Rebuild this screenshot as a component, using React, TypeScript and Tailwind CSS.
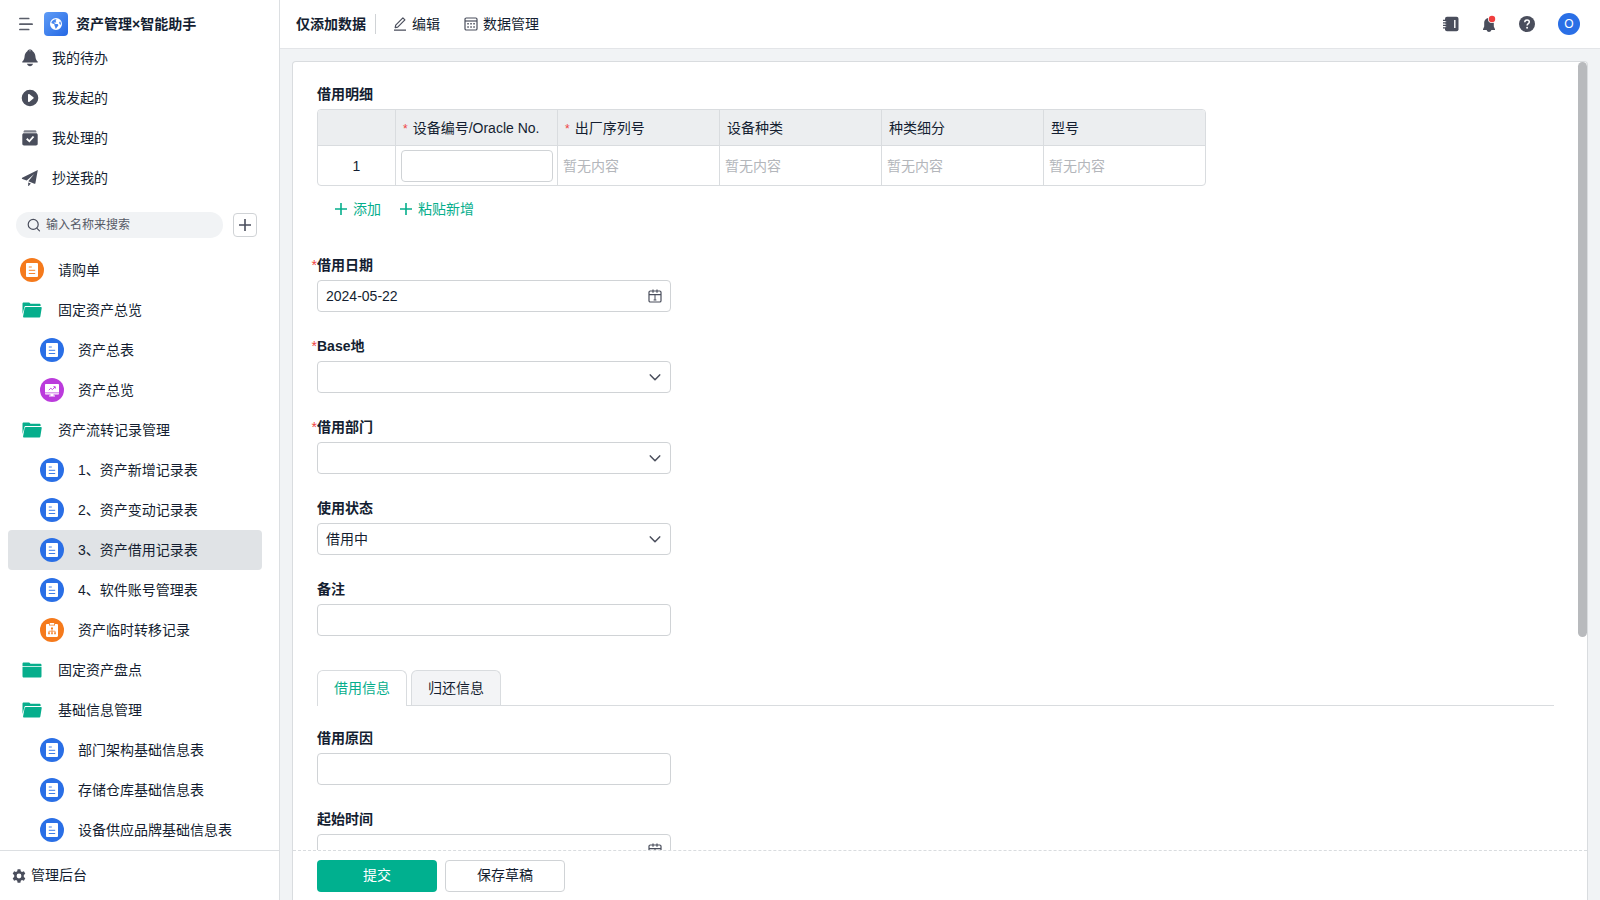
import type { ReactNode } from 'react';
import { FaEarthAmericas } from 'react-icons/fa6';

type IconProps = { className?: string };

const INK = 'text-[#4a4e5c]';

function MenuIcon() {
  return (
    <svg viewBox="0 0 14 14" className="size-3.5 text-[#5a5e6a]" fill="none" stroke="currentColor" strokeWidth="1.7" strokeLinecap="round">
      <path d="M0.900 1.500h8.800M0.900 7.200h12.200M0.900 12.500h8.800" />
    </svg>
  );
}

function GlobeLogo() {
  return (
    <span className="flex size-6 items-center justify-center rounded bg-linear-to-br from-[#5f9cf6] to-[#2467e4] text-white">
      <FaEarthAmericas className="size-3" />
    </span>
  );
}

function BellSolid() {
  return (
    <svg viewBox="0 0 18 18" className="size-[18px]" fill="currentColor">
      <path
        fillRule="evenodd"
        d="M9 .5c1.300 0 2.300.7 2.700 1.700 1.700 1.100 2.500 2.900 2.700 5.100.2 2.400.8 4 2.200 5.200.4.400.2 1.100-.4 1.100H1.800c-.6 0-.8-.7-.4-1.100 1.400-1.200 2-2.800 2.200-5.200.2-2.200 1-4 2.700-5.100C6.700 1.200 7.700.5 9 .5zm0 1c-.5 0-.9.300-1.100.7a6 6 0 0 1 2.200 0C9.900 1.800 9.500 1.500 9 1.500z"
      />
      <path d="M6 14.800h6c-.3 1.500-1.500 2.400-3 2.400s-2.700-.9-3-2.400z" />
    </svg>
  );
}

function PlaySolid() {
  return (
    <svg viewBox="0 0 18 18" className="size-[18px]" fill="currentColor">
      <path fillRule="evenodd" d="M9 .7a8.300 8.300 0 1 0 0 16.600A8.300 8.300 0 0 0 9 .7zM7 5.700c0-.7.600-1 1.200-.7l4.200 3.300c.4.300.4 1 0 1.300L8.200 12.900c-.5.4-1.200.1-1.200-.6z" />
    </svg>
  );
}

function DoneSolid() {
  return (
    <svg viewBox="0 0 18 18" className="size-[18px]" fill="currentColor">
      <path d="M4 1.200h10c.8 0 1.400.6 1.400 1.300v.9H2.600v-.9c0-.7.600-1.300 1.400-1.300z" opacity=".7" />
      <path fillRule="evenodd" d="M3 4.200h12c1 0 1.700.7 1.700 1.700v8.800c0 1-.7 1.700-1.700 1.700H3c-1 0-1.700-.7-1.700-1.700V5.900c0-1 .7-1.700 1.700-1.700zm8.800 2.700l-3.500 4-1.900-1.800-1.300 1.300 3.300 3.100 4.900-5.400z" />
    </svg>
  );
}

function SendSolid() {
  return (
    <svg viewBox="0 0 18 18" className="size-[18px]" fill="currentColor">
      <path d="M16.800.9L1.200 8.800c-.5.300-.4.900.1 1.100l4.400 1.700L13.200 5 7.300 12.300l6.100 2.400c.5.200.9 0 1-.5z" />
      <path d="M7.200 13.500l2.700 1-2.200 2.400c-.2.200-.5.100-.5-.2z" />
    </svg>
  );
}

function SearchIcon() {
  return (
    <svg viewBox="0 0 14 14" className={`size-3.5 shrink-0 ${INK}`} fill="none" stroke="currentColor" strokeWidth="1.2" strokeLinecap="round">
      <circle cx="6.200" cy="6.400" r="5" />
      <path d="M10 10.400l2.500 2.500" />
    </svg>
  );
}

function PlusIcon({ className }: IconProps) {
  return (
    <svg viewBox="0 0 12 12" className={className} fill="none" stroke="currentColor" strokeWidth="1.600">
      <path d="M6 0v12M0 6h12" />
    </svg>
  );
}

function FolderIcon({ open }: { open: boolean }) {
  return (
    <svg viewBox="0 0 20 16" className="h-4 w-5 text-[#06ae8c]" fill="currentColor">
      {open ? (
        <>
          <path d="M.5 12V1.700C.5 1 1 .5 1.700.5h5.500l1.300 1.200h8.800c.8 0 1.300.5 1.300 1.300v1.100H4c-1 0-1.500.5-1.700 1.300z" />
          <path d="M4 4.900h14.900c.5 0 .9.500.8 1l-1.300 8.300c-.1.800-.6 1.300-1.400 1.300H2.200c-.8 0-1.300-.6-1.100-1.300l1.500-8.200c.2-.7.700-1.100 1.400-1.100z" />
        </>
      ) : (
        <>
          <path d="M.5 4.200V1.700C.5 1 1 .5 1.700.5h5.500l1.300 1.200h9.700c.7 0 1.300.5 1.300 1.200v1.300z" />
          <path d="M.5 5.100h19v9.100c0 .7-.6 1.300-1.300 1.300H1.800c-.7 0-1.300-.6-1.300-1.300z" />
        </>
      )}
    </svg>
  );
}

function FormGlyph() {
  return (
    <svg viewBox="0 0 24 24" className="size-6">
      <rect x="6" y="5" width="12" height="14" rx="1" fill="#fff" />
      <path d="M8.800 9h3M8.800 12.300h6.400M8.800 15.500h6.400" stroke="currentColor" strokeWidth="1" opacity=".9" />
    </svg>
  );
}

function BoardGlyph() {
  return (
    <svg viewBox="0 0 24 24" className="size-6">
      <path d="M6 6h12c.6 0 1 .4 1 1v7.500H5V7c0-.6.400-1 1-1zM5 15.200h14v.3c0 .6-.4 1-1 1h-4.500v1H15v1H9v-1h1.500v-1H6c-.6 0-1-.4-1-1z" fill="#fff" />
      <path d="M8.800 12.200l2-2 1.600 1.400 2.600-2.600M13.400 8.700h1.900v1.900" fill="none" stroke="currentColor" strokeWidth=".9" />
    </svg>
  );
}

function FlowGlyph() {
  return (
    <svg viewBox="0 0 24 24" className="size-6">
      <path d="M7.200 6H9v1.500h6V6h1.800c.7 0 1.200.5 1.200 1.200v10.600c0 .7-.5 1.200-1.200 1.200H7.200c-.7 0-1.200-.5-1.200-1.200V7.200C6 6.500 6.500 6 7.200 6z" fill="#fff" />
      <path d="M9.800 5h4.400v1.700H9.800z" fill="#fff" />
      <path d="M12 10.500v4.500M8.900 15v-1.800h6.200V15" fill="none" stroke="currentColor" strokeWidth=".7" />
      <path d="M11 9.500h2v1.800h-2zM8.200 14.600h1.600v1.700H8.200zM11.200 14.600h1.600v1.700h-1.600zM14.200 14.600h1.600v1.700h-1.600z" fill="currentColor" />
    </svg>
  );
}

function GearIcon() {
  return (
    <svg viewBox="0 0 14 14" className={`size-3.5 ${INK}`}>
      <path
        fill="currentColor"
        fillRule="evenodd"
        d="M5.600.300h2.800l.4 1.900 1.200.7 1.900-.6 1.400 2.400-1.500 1.300v2l1.500 1.300-1.400 2.400-1.900-.6-1.200.7-.4 1.900H5.600l-.4-1.900-1.200-.7-1.900.6L.700 9.300 2.200 8V6L.700 4.700l1.400-2.400 1.900.6 1.200-.7zM7 4.600a2.400 2.400 0 1 0 0 4.800 2.400 2.400 0 0 0 0-4.800z"
      />
    </svg>
  );
}

function PencilIcon() {
  return (
    <svg viewBox="0 0 14 14" className={`size-3.5 ${INK}`} fill="none" stroke="currentColor" strokeWidth="1.200" strokeLinejoin="round">
      <path d="M2.200 10.600l.5-2.500L9.900.9l2 2-7.200 7.200zM1 13.200h12" />
    </svg>
  );
}

function DataIcon() {
  return (
    <svg viewBox="0 0 14 14" className={`size-3.5 ${INK}`} fill="none" stroke="currentColor" strokeWidth="1.200">
      <rect x="1" y="1" width="12" height="12" rx="1.300" />
      <path d="M1 4h12" />
      <path d="M3.300 6.800h1.500M6.300 6.800h1.500M9.300 6.800h1.500M3.300 10h1.500M6.300 10h1.500M9.300 10h1.500" strokeWidth="1.500" />
    </svg>
  );
}

function ContactsIcon() {
  return (
    <svg viewBox="0 0 16 16" className="size-4">
      <rect x="2" y=".7" width="13.500" height="14.600" rx="2" fill="currentColor" />
      <path d="M0 4.400h2.600M0 6.900h2.600M0 9.400h2.600M0 11.900h2.600" stroke="currentColor" strokeWidth="1.200" />
      <path d="M1.800 5.700h1.400M1.800 8.200h1.400M1.800 10.700h1.400" stroke="#fff" strokeWidth=".8" />
      <path d="M11.800 4v8" stroke="#fff" strokeWidth="1.400" />
    </svg>
  );
}

function NoticeIcon() {
  return (
    <svg viewBox="0 0 16 18" className="h-[18px] w-4">
      <path d="M8 3c3 0 4.800 2.200 4.800 5v3.600l1.200 2.600v.8h-3.600C10 16.200 9.200 17 8 17s-2-.8-2.400-2H2v-.8l1.200-2.600V8c0-2.800 1.800-5 4.800-5z" fill="currentColor" />
      <circle cx="11" cy="4" r="4" fill="#fff" />
      <circle cx="11" cy="4" r="3.200" fill="#f03e3e" />
    </svg>
  );
}

function HelpIcon() {
  return (
    <svg viewBox="0 0 16 16" className="size-4">
      <circle cx="8" cy="8" r="8" fill="currentColor" />
      <path d="M5.700 6.200c.1-1.400 1-2.200 2.300-2.200s2.300.8 2.300 2c0 1.700-2.200 1.700-2.200 3.500" fill="none" stroke="#fff" strokeWidth="1.500" />
      <circle cx="8.100" cy="11.700" r=".95" fill="#fff" />
    </svg>
  );
}

function CalendarIcon() {
  return (
    <svg viewBox="0 0 14 14" className={`size-3.5 ${INK}`} fill="none" stroke="currentColor" strokeWidth="1.200">
      <rect x="1" y="2" width="12" height="11" rx="1.300" />
      <path d="M1 5.600h12M5 .600v3.200M9 .600v3.200" />
      <path d="M7 5.600v5.400M5.600 11h2.800" strokeWidth="1" />
    </svg>
  );
}

function ChevronIcon() {
  return (
    <svg viewBox="0 0 14 14" className={`size-3.5 ${INK}`} fill="none" stroke="currentColor" strokeWidth="1.500" strokeLinecap="round" strokeLinejoin="round">
      <path d="M2.300 4.900L7 9.700l4.700-4.800" />
    </svg>
  );
}

const shortcuts: { label: string; icon: ReactNode }[] = [
  { label: '我的待办', icon: <BellSolid /> },
  { label: '我发起的', icon: <PlaySolid /> },
  { label: '我处理的', icon: <DoneSolid /> },
  { label: '抄送我的', icon: <SendSolid /> },
];

type Kind = 'form' | 'flow' | 'purchase' | 'board' | 'open' | 'closed';

const entries: { label: string; kind: Kind; child?: boolean; active?: boolean }[] = [
  { label: '请购单', kind: 'purchase' },
  { label: '固定资产总览', kind: 'open' },
  { label: '资产总表', kind: 'form', child: true },
  { label: '资产总览', kind: 'board', child: true },
  { label: '资产流转记录管理', kind: 'open' },
  { label: '1、资产新增记录表', kind: 'form', child: true },
  { label: '2、资产变动记录表', kind: 'form', child: true },
  { label: '3、资产借用记录表', kind: 'form', child: true, active: true },
  { label: '4、软件账号管理表', kind: 'form', child: true },
  { label: '资产临时转移记录', kind: 'flow', child: true },
  { label: '固定资产盘点', kind: 'closed' },
  { label: '基础信息管理', kind: 'open' },
  { label: '部门架构基础信息表', kind: 'form', child: true },
  { label: '存储仓库基础信息表', kind: 'form', child: true },
  { label: '设备供应品牌基础信息表', kind: 'form', child: true },
];

const badgeTone: Record<'form' | 'flow' | 'purchase' | 'board', string> = {
  form: 'bg-[#2a6fe6] text-[#2a6fe6]',
  flow: 'bg-[#f57a1c] text-[#f57a1c]',
  purchase: 'bg-[#f57a1c] text-[#f57a1c]',
  board: 'bg-[#bb3bdc] text-[#bb3bdc]',
};

function EntryIcon({ kind }: { kind: Kind }) {
  if (kind === 'open' || kind === 'closed') {
    return (
      <span className="flex size-6 items-center justify-center">
        <FolderIcon open={kind === 'open'} />
      </span>
    );
  }
  return (
    <span className={`size-6 overflow-hidden rounded-full ${badgeTone[kind]}`}>
      {kind === 'board' ? <BoardGlyph /> : kind === 'flow' ? <FlowGlyph /> : <FormGlyph />}
    </span>
  );
}

function Sidebar() {
  return (
    <aside className="flex w-70 shrink-0 flex-col border-r border-[#dcdfe2] bg-white">
      <div className="flex items-center pt-3 pb-0.5 pl-[19px]">
        <button type="button" aria-label="菜单">
          <MenuIcon />
        </button>
        <span className="ml-[11px]">
          <GlobeLogo />
        </span>
        <h1 className="ml-2 font-semibold">资产管理×智能助手</h1>
      </div>

      <nav className="min-h-0 flex-1 overflow-y-auto [scrollbar-width:none]">
        <ul>
          {shortcuts.map((s) => (
            <li key={s.label}>
              <a href="#" className="flex h-10 items-center gap-[13px] pl-[21px]">
                <span className={INK}>{s.icon}</span>
                {s.label}
              </a>
            </li>
          ))}
        </ul>

        <div className="flex items-center gap-2.5 pt-3.5 pb-3 pl-4">
          <label className="flex h-[26px] w-[207px] items-center gap-[5px] rounded-full bg-[#f1f3f5] px-[11px]">
            <SearchIcon />
            <input
              aria-label="搜索"
              placeholder="输入名称来搜索"
              className="w-full bg-transparent text-xs outline-none placeholder:text-[#565a66]"
            />
          </label>
          <button type="button" aria-label="新建" className="flex size-6 items-center justify-center rounded border border-[#d0d3d6] text-[#4a4e5c]">
            <PlusIcon className="size-3" />
          </button>
        </div>

        <ul className="pr-[17px] pl-2">
          {entries.map((e) => (
            <li key={e.label}>
              <a
                href="#"
                className={`flex h-10 items-center gap-3.5 rounded ${e.child ? 'pl-8' : 'pl-3'} ${e.active ? 'bg-[#e0e3e6]' : ''}`}
              >
                <EntryIcon kind={e.kind} />
                {e.label}
              </a>
            </li>
          ))}
        </ul>
      </nav>

      <a href="#" className="flex h-[50px] items-center gap-[5px] border-t border-[#dcdfe2] pl-3">
        <GearIcon />
        管理后台
      </a>
    </aside>
  );
}

function TopBar() {
  return (
    <header className="flex h-[49px] shrink-0 items-center justify-between border-b border-[#e3e5e8] bg-white pr-5 pl-4">
      <div className="flex items-center">
        <h2 className="font-semibold">仅添加数据</h2>
        <span className="ml-[9px] h-5 w-px bg-[#d0d3d6]" />
        <button type="button" className="ml-[17px] flex items-center gap-[5px]">
          <PencilIcon />
          编辑
        </button>
        <button type="button" className="ml-6 flex items-center gap-[5px]">
          <DataIcon />
          数据管理
        </button>
      </div>
      <div className="flex items-center gap-[23px]">
        <div className={`flex items-center gap-[22px] ${INK}`}>
          <button type="button" aria-label="通讯录">
            <ContactsIcon />
          </button>
          <button type="button" aria-label="通知">
            <NoticeIcon />
          </button>
          <button type="button" aria-label="帮助">
            <HelpIcon />
          </button>
        </div>
        <button type="button" className="flex size-[22px] items-center justify-center rounded-full bg-[#2a6fe6] text-xs text-white">
          O
        </button>
      </div>
    </header>
  );
}

const control = 'block h-8 w-full rounded border border-[#d0d3d6] bg-white px-2 outline-none';

function Field({ id, label, required, children }: { id: string; label: string; required?: boolean; children: ReactNode }) {
  return (
    <div className="w-[354px]">
      <label htmlFor={id} className="relative mb-1 block font-semibold">
        {required && <span className="absolute right-full font-normal text-[#ef4444]">*</span>}
        {label}
      </label>
      <div className="relative">{children}</div>
    </div>
  );
}

function TextField({ id, label }: { id: string; label: string }) {
  return (
    <Field id={id} label={label}>
      <input id={id} className={control} />
    </Field>
  );
}

function DateField({ id, label, required, value }: { id: string; label: string; required?: boolean; value?: string }) {
  return (
    <Field id={id} label={label} required={required}>
      <input id={id} defaultValue={value} className={control} />
      <span className="pointer-events-none absolute inset-y-0 right-[9px] flex items-center">
        <CalendarIcon />
      </span>
    </Field>
  );
}

function SelectField({ id, label, required, options }: { id: string; label: string; required?: boolean; options: string[] }) {
  return (
    <Field id={id} label={label} required={required}>
      <select id={id} className={`${control} appearance-none`}>
        {options.map((o) => (
          <option key={o}>{o}</option>
        ))}
      </select>
      <span className="pointer-events-none absolute inset-y-0 right-[9px] flex items-center">
        <ChevronIcon />
      </span>
    </Field>
  );
}

const columns = [
  { label: '设备编号/Oracle No.', required: true },
  { label: '出厂序列号', required: true },
  { label: '设备种类' },
  { label: '种类细分' },
  { label: '型号' },
];

function DetailTable() {
  return (
    <section>
      <h3 className="mb-1 font-semibold">借用明细</h3>
      <table className="w-[889px] table-fixed border-separate border-spacing-0 overflow-hidden rounded border border-[#d9dcdf]">
        <thead>
          <tr className="h-9 bg-[#eceef0]">
            <th aria-label="序号" className="w-[77px] border-b border-[#d9dcdf]" />
            {columns.map((c) => (
              <th key={c.label} className="border-b border-l border-[#d9dcdf] pt-px pb-0 pl-[7px] text-left font-normal whitespace-nowrap">
                {c.required && <span className="mr-[5px] text-xs text-[#ef4444]">*</span>}
                {c.label}
              </th>
            ))}
          </tr>
        </thead>
        <tbody>
          <tr className="h-[39px]">
            <td className="pt-px pb-0 text-center">1</td>
            <td className="border-l border-[#d9dcdf] py-0 pr-1 pl-[5px]">
              <input aria-label="设备编号/Oracle No." className={control} />
            </td>
            {columns.slice(1).map((c) => (
              <td key={c.label} className="border-l border-[#d9dcdf] pt-px pb-0 pl-[5px] text-[#b3b6bb]">
                暂无内容
              </td>
            ))}
          </tr>
        </tbody>
      </table>
      <div className="flex h-[45px] items-center gap-[19px] pt-px pl-[18px] text-[#06ae8c]">
        <button type="button" className="flex items-center gap-1.5">
          <PlusIcon className="size-3" />
          添加
        </button>
        <button type="button" className="flex items-center gap-1.5">
          <PlusIcon className="size-3" />
          粘贴新增
        </button>
      </div>
    </section>
  );
}

function Tabs() {
  return (
    <div role="tablist" className="flex h-9 gap-1 border-b border-[#d9dcdf]">
      <button
        type="button"
        role="tab"
        aria-selected="true"
        className="-mb-px rounded-t-md border border-b-0 border-[#d9dcdf] bg-white px-4 text-[#06ae8c]"
      >
        借用信息
      </button>
      <button type="button" role="tab" aria-selected="false" className="rounded-t-md border border-b-0 border-[#d9dcdf] bg-[#f3f4f6] px-4">
        归还信息
      </button>
    </div>
  );
}

export default function App() {
  return (
    <div className="flex h-screen overflow-hidden bg-[#f1f3f5] font-['Liberation_Sans','Noto_Sans_CJK_SC',sans-serif] text-[14px] leading-[21px] text-[#141e31]">
      <Sidebar />
      <div className="flex min-w-0 flex-1 flex-col">
        <TopBar />
        <main className="flex min-h-0 flex-1 flex-col px-3 pt-3">
          <form className="relative flex min-h-0 flex-1 flex-col rounded-t border border-b-0 border-[#d9dcdf] bg-white">
            <div className="min-h-0 flex-1 overflow-y-auto pt-[22px] pr-[33px] pb-6 pl-6 [scrollbar-width:none]">
              <div className="flex flex-col gap-6">
                <DetailTable />
                <DateField id="date" label="借用日期" required value="2024-05-22" />
                <SelectField id="base" label="Base地" required options={['']} />
                <SelectField id="dept" label="借用部门" required options={['']} />
                <SelectField id="status" label="使用状态" options={['借用中']} />
                <TextField id="remark" label="备注" />
              </div>
              <div className="mt-[34px] mb-[22px]">
                <Tabs />
              </div>
              <div className="flex flex-col gap-6">
                <TextField id="reason" label="借用原因" />
                <DateField id="start" label="起始时间" />
              </div>
            </div>
            <div className="absolute top-0 right-0 h-[575px] w-[9px] rounded-full bg-[#b8babd]" />
            <div className="flex h-[50px] shrink-0 items-center gap-2 border-t border-dashed border-[#d9dcdf] pl-6">
              <button type="submit" className="h-8 w-30 rounded bg-[#00b08f] text-white">
                提交
              </button>
              <button type="button" className="h-8 w-30 rounded border border-[#d0d3d6] bg-white">
                保存草稿
              </button>
            </div>
          </form>
        </main>
      </div>
    </div>
  );
}
